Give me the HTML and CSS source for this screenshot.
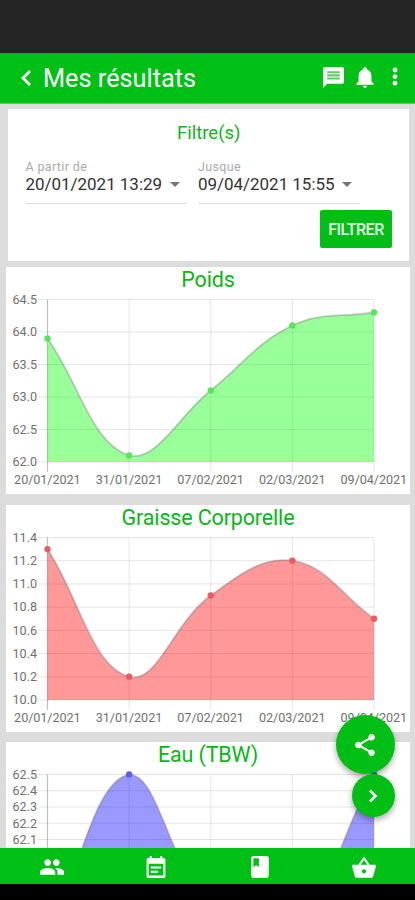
FILE: index.html
```html
<!DOCTYPE html>
<html lang="fr">
<head>
<meta charset="utf-8">
<title>Mes résultats</title>
<link rel="stylesheet" href="styles.css">
</head>
<body>
<div class="screen">
  <div class="status"></div>
  <header class="topbar">
    <svg class="back" viewBox="0 0 12 18"><path d="M10 2L3 9l7 7"/></svg>
    <h1><svg class="fit" width="154" height="32"><text x="0" y="25.500" textLength="153" lengthAdjust="spacingAndGlyphs">Mes résultats</text></svg></h1>
    <svg class="icon message" viewBox="2 2 20 20"><path d="M20 2H4c-1.100 0-1.990.9-1.990 2L2 22l4-4h14c1.100 0 2-.9 2-2V4c0-1.100-.9-2-2-2z"/><path class="lines" d="M6 6h12v2H6zM6 9h12v2H6zM6 12h12v2H6z"/></svg>
    <svg class="icon bell" viewBox="4 2.500 16 19.500"><path d="M12 22c1.100 0 2-.9 2-2h-4c0 1.100.89 2 2 2zm6-6v-5c0-3.070-1.640-5.640-4.500-6.320V4c0-.83-.67-1.500-1.500-1.500s-1.500.67-1.500 1.500v.68C7.630 5.360 6 7.920 6 11v5l-2 2v1h16v-1l-2-2z"/></svg>
    <svg class="icon more" viewBox="0 0 6 20"><circle cx="3" cy="3" r="2.400"/><circle cx="3" cy="9.600" r="2.400"/><circle cx="3" cy="16.200" r="2.400"/></svg>
  </header>
  <main class="content">
    <section class="card filter">
      <h2 class="filter-title">Filtre(s)</h2>
      <div class="fields">
        <div class="field"><label>A partir de</label><div class="value"><span>20/01/2021 13:29</span><i class="caret"></i></div></div>
        <div class="field"><label>Jusque</label><div class="value"><span>09/04/2021 15:55</span><i class="caret"></i></div></div>
      </div>
      <button class="submit" type="button">FILTRER</button>
    </section>
    <section class="card chart-card"><h2>Poids</h2><svg class="chart" data-chart="poids"></svg></section>
    <section class="card chart-card"><h2>Graisse Corporelle</h2><svg class="chart" data-chart="graisse"></svg></section>
    <section class="card chart-card"><h2>Eau (TBW)</h2><svg class="chart" data-chart="eau"></svg></section>
  </main>
  <nav class="tabs">
    <a><svg class="people" viewBox="1 5 22 14"><path d="M16 11c1.660 0 2.990-1.340 2.990-3S17.660 5 16 5s-3 1.340-3 3 1.340 3 3 3zm-8 0c1.660 0 2.990-1.340 2.990-3S9.660 5 8 5 5 6.340 5 8s1.340 3 3 3zm0 2c-2.330 0-7 1.170-7 3.500V19h14v-2.500c0-2.330-4.670-3.500-7-3.500zm8 0c-.29 0-.62.02-.97.05 1.160.84 1.970 1.970 1.970 3.450V19h6v-2.500c0-2.330-4.670-3.500-7-3.500z"/></svg></a>
    <a><svg class="calendar" viewBox="3 1 18 21"><path fill-rule="evenodd" d="M16 1v2H8V1H6v2H5c-1.100 0-2 .9-2 2v15c0 1.100.9 2 2 2h14c1.100 0 2-.9 2-2V5c0-1.100-.9-2-2-2h-1V1zM5 8.500h14V19.500H5zM7 11h10v2H7zM7 15h7v2H7z"/></svg></a>
    <a><svg class="book" viewBox="4 2 16 20"><path fill-rule="evenodd" d="M18 2H6c-1.100 0-2 .9-2 2v16c0 1.100.9 2 2 2h12c1.100 0 2-.9 2-2V4c0-1.100-.9-2-2-2zM6 4h5v8l-2.500-1.500L6 12V4z"/></svg></a>
    <a><svg class="basket" viewBox="1 2 22 19"><path d="M17.210 9l-4.380-6.560c-.19-.28-.51-.42-.83-.42-.32 0-.64.14-.83.430L6.790 9H2c-.55 0-1 .45-1 1 0 .09.010.18.040.27l2.540 9.270c.23.84 1 1.460 1.920 1.460h13c.92 0 1.690-.62 1.930-1.460l2.540-9.270L23 10c0-.55-.45-1-1-1h-4.790zM9 9l3-4.400L15 9H9zm3 8c-1.100 0-2-.9-2-2s.9-2 2-2 2 .9 2 2-.9 2-2 2z"/></svg></a>
  </nav>
  <div class="system"></div>
  <div class="floating">
    <button class="fab share" type="button"><svg viewBox="3 2 18 20"><path d="M18 16.080c-.76 0-1.440.3-1.960.77L8.910 12.700c.05-.23.09-.46.09-.7s-.04-.47-.09-.7l7.050-4.110c.54.5 1.250.81 2.040.81 1.660 0 3-1.340 3-3s-1.340-3-3-3-3 1.340-3 3c0 .24.040.47.090.7L8.040 9.810C7.500 9.310 6.790 9 6 9c-1.660 0-3 1.340-3 3s1.340 3 3 3c.79 0 1.500-.31 2.040-.81l7.120 4.160c-.05.21-.08.43-.08.650 0 1.610 1.310 2.920 2.920 2.920s2.920-1.310 2.920-2.920-1.310-2.920-2.920-2.920z"/></svg></button>
    <button class="fab next" type="button"><svg viewBox="0 0 10 14"><path d="M2 1.500L7.500 7 2 12.500"/></svg></button>
  </div>
</div>
<script src="charts.js"></script>
</body>
</html>
```
FILE: styles.css
```css
* { box-sizing: border-box; }
body { margin: 0; font-family: Roboto, "Liberation Sans", sans-serif; }
h1, h2 { margin: 0; font-weight: 400; }
button { border: 0; padding: 0; font-family: inherit; color: #fff; background: #00be14; }
svg { display: block; flex: none; }

.screen { position: relative; display: flex; flex-direction: column; width: 415px; height: 900px; overflow: hidden; background: #dcdcdc; }
.status { flex: none; height: 53px; background: #252525; }
.topbar { flex: none; display: flex; align-items: center; height: 51px; padding: 0 17.500px 2px 19.500px; background: #00c016; border-bottom: 1px solid #5ccb68; color: #fff; }
.back { width: 12px; height: 18px; margin-top: 2px; fill: none; stroke: #fff; stroke-width: 2.8; }
h1 { flex: 1; margin-left: 11px; }
.fit { font-size: 26px; fill: #fff; overflow: visible; }
.icon { fill: #fff; }
.message { width: 21px; height: 21px; }
.message .lines { fill: #5dcd69; }
.bell { width: 18px; height: 21px; margin-left: 11.500px; }
.more { width: 6px; height: 20px; margin-left: 18px; }

.content { flex: 1; min-height: 0; overflow: hidden; padding: 5px 5px 0 6px; }
.card { background: #fff; }
.filter { display: flex; flex-direction: column; height: 152px; margin: 0 1px 6px 1.500px; padding: 0 17px 0 18px; }
.filter-title { margin-top: 13px; color: #12b421; font-size: 18.500px; line-height: 22px; text-align: center; }
.fields { display: flex; gap: 11px; margin-top: 15px; }
.field { width: 161.500px; height: 45px; border-bottom: 1px solid #dedede; }
.field label { display: block; color: #aaa; font-size: 12.500px; line-height: 15px; letter-spacing: .35px; }
.value { display: flex; align-items: center; color: #333; font-size: 17px; line-height: 20px; white-space: nowrap; }
.value span { width: 136px; letter-spacing: -.03px; }
.caret { margin-left: 8px; border: 5.500px solid transparent; border-top: 5.500px solid #757575; border-bottom: 0; }
.submit { align-self: flex-end; width: 72px; height: 38px; margin-top: 6px; border-radius: 2px; font-size: 16px; letter-spacing: -.5px; font-weight: 500; color: #e6ffe8; }

.chart-card { height: 227px; margin-bottom: 10.500px; }
.chart-card h2 { height: 29px; color: #08b714; font-size: 21.500px; line-height: 25px; text-align: center; letter-spacing: -.15px; }
.chart { width: 404px; height: 198px; overflow: visible; font-size: 12.600px; fill: #707070; }
.grid { stroke: #000; stroke-opacity: .1; stroke-width: 1; }
.axis { stroke: #000; stroke-opacity: .25; stroke-width: 1.200; }
.curve { fill: none; stroke: #777; stroke-opacity: .4; stroke-width: 1.800; }

.tabs { flex: none; display: grid; grid-template-columns: repeat(4, 1fr); height: 36px; background: #00c016; }
.tabs a { display: flex; align-items: center; justify-content: center; padding: 2px 0 0 1px; }
.tabs svg { fill: #fff; }
.people { width: 24px; height: 16px; }
.calendar { width: 20px; height: 22px; }
.book { width: 18px; height: 22px; }
.basket { width: 24px; height: 21px; }
.system { flex: none; height: 16px; background: #000; }

.floating { position: absolute; right: 20.500px; top: 715px; display: flex; flex-direction: column; align-items: flex-end; }
.fab { display: flex; align-items: center; justify-content: center; border-radius: 50%; box-shadow: 0 3px 6px rgba(0, 0, 0, .35); }
.share { width: 59px; height: 59px; }
.share svg { width: 20px; height: 22px; fill: #fff; }
.next { width: 43px; height: 43px; }
.next svg { width: 10px; height: 14px; fill: none; stroke: #fff; stroke-width: 2.500; }
```
FILE: charts.js
```js
const dates = ["20/01/2021", "31/01/2021", "07/02/2021", "02/03/2021", "09/04/2021"];
const charts = {
  poids: { min: 62, max: 64.5, step: 0.5, values: [63.9, 62.1, 63.1, 64.1, 64.3], color: "0,255,0", dot: "#56e65b" },
  graisse: { min: 10, max: 11.4, step: 0.2, values: [11.3, 10.2, 10.9, 11.2, 10.7], color: "255,0,0", dot: "#e95b60" },
  eau: { min: 61.5, max: 62.5, step: 0.1, values: [61.5, 62.5, 61.7, 61.6, 62.5], color: "0,0,255", dot: "#5e5ce2" }
};
const W = 326.5, H = 162.5, TENSION = 0.4;

function curve(points) {
  const clamp = y => Math.max(0, Math.min(H, y));
  const controls = points.map((p, i) => {
    const a = points[i - 1] || p, b = points[i + 1] || p;
    const before = Math.hypot(p[0] - a[0], p[1] - a[1]);
    const after = Math.hypot(b[0] - p[0], b[1] - p[1]);
    const fa = TENSION * before / (before + after), fb = TENSION * after / (before + after);
    const dx = b[0] - a[0], dy = b[1] - a[1];
    return { prev: [p[0] - fa * dx, clamp(p[1] - fa * dy)], next: [p[0] + fb * dx, clamp(p[1] + fb * dy)] };
  });
  return points.slice(1).reduce((d, p, i) => d + `C${controls[i].next} ${controls[i + 1].prev} ${p}`, `M${points[0]}`);
}

for (const svg of document.querySelectorAll(".chart")) {
  const c = charts[svg.dataset.chart];
  const points = c.values.map((v, i) => [i * W / 4, H * (c.max - v) / (c.max - c.min)]);
  const line = curve(points);
  const rows = Math.round((c.max - c.min) / c.step);
  let out = "";
  for (let i = 0; i <= rows; i++) {
    const y = H * i / rows;
    out += `<path class="grid" d="M-10 ${y}H${W}"/><text x="-35" y="${y + 4.3}" textLength="24.5">${(c.max - i * c.step).toFixed(1)}</text>`;
  }
  dates.forEach((date, i) => {
    const x = i * W / 4;
    out += `<path class="${i ? "grid" : "axis"}" d="M${x} 0V${H + 10}"/><text x="${x - 33.4}" y="${H + 22}" textLength="66.5">${date}</text>`;
  });
  out += `<path fill="rgba(${c.color},.4)" d="${line}V${H}H0Z"/><path class="curve" d="${line}"/>`;
  points.forEach(p => { out += `<circle cx="${p[0]}" cy="${p[1]}" r="3.2" fill="${c.dot}"/>`; });
  svg.setAttribute("viewBox", "-41.5 -3.5 404 198");
  svg.innerHTML = out;
}
```
